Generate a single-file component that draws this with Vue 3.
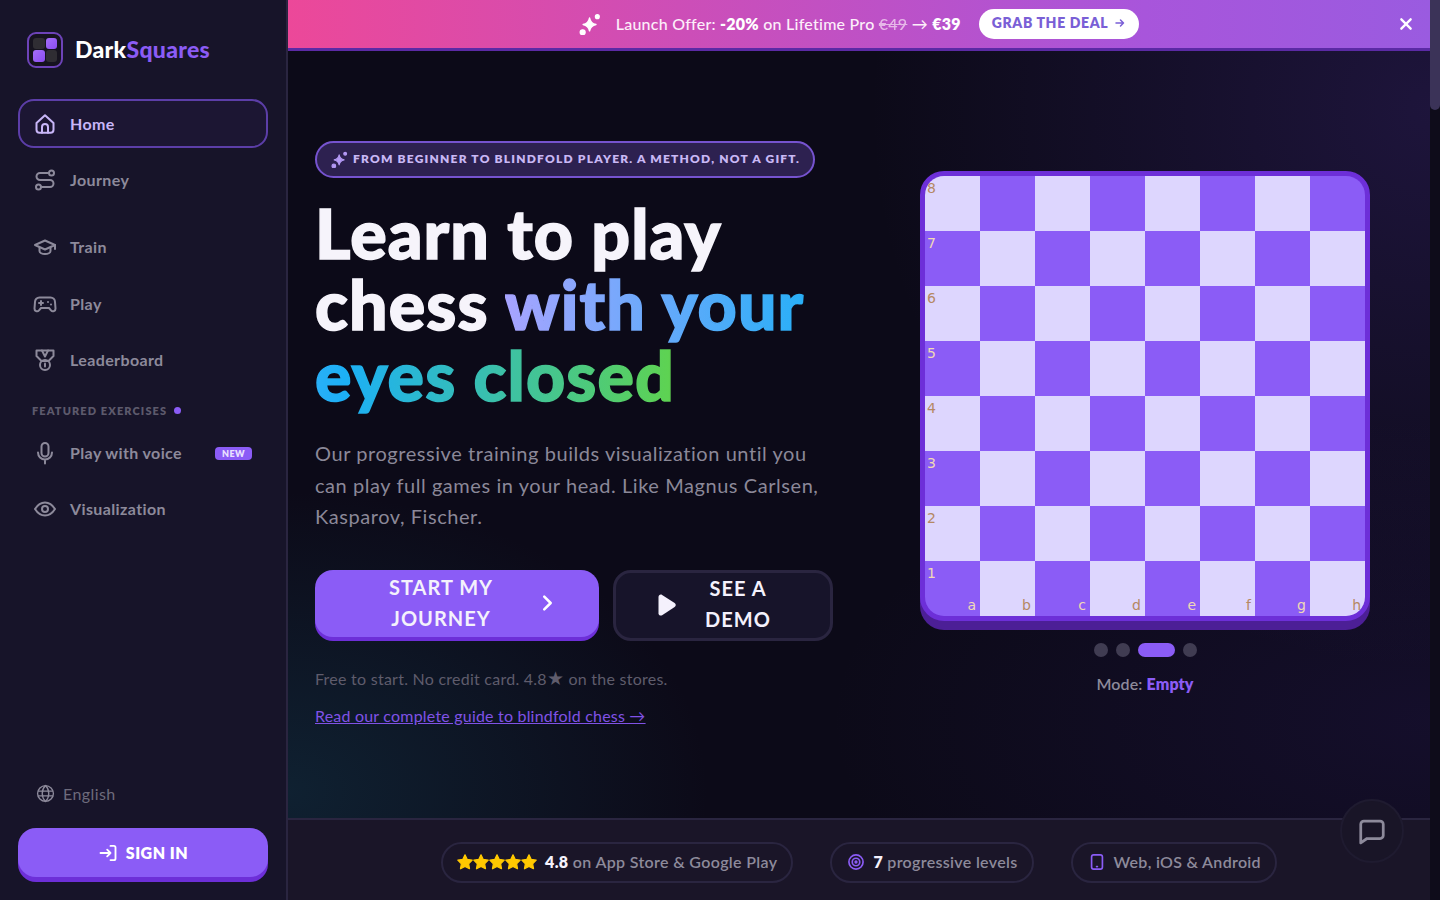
<script setup>
const nav = [
  { label: 'Journey', icon: 'journey', cls: 'gap-after' },
  { label: 'Train', icon: 'train', cls: 'wide-after' },
  { label: 'Play', icon: 'play' },
  { label: 'Leaderboard', icon: 'medal' },
]
const files = ['a', 'b', 'c', 'd', 'e', 'f', 'g', 'h']
const squares = []
for (let r = 0; r < 8; r++) {
  for (let f = 0; f < 8; f++) {
    squares.push({
      id: files[f] + (8 - r),
      light: (r + f) % 2 === 0,
      rank: f === 0 ? 8 - r : null,
      file: r === 7 ? files[f] : null,
    })
  }
}
</script>

<template>
  <div class="page">
    <aside class="sidebar">
      <div class="brand">
        <div class="logo">
          <i class="cell"></i><i class="cell on"></i><i class="cell on"></i><i class="cell"></i>
        </div>
        <span class="brand-name">Dark<em>Squares</em></span>
      </div>

      <a class="nav-item active">
        <svg class="ico" viewBox="0 0 24 24"><path d="M3.5 11 12 3.2 20.5 11v6.800a3 3 0 0 1-3 3h-11a3 3 0 0 1-3-3z" /><path d="M9 20.800V15a3 3 0 0 1 6 0v5.800" /></svg>
        <span>Home</span>
      </a>

      <a v-for="item in nav" :key="item.label" class="nav-item" :class="item.cls">
        <svg v-if="item.icon === 'journey'" class="ico" viewBox="0 0 24 24"><circle cx="18.5" cy="5" r="2.5" /><circle cx="5.5" cy="19" r="2.5" /><path d="M16 5H7a3.5 3.5 0 0 0 0 7h10a3.5 3.5 0 0 1 0 7H8" /></svg>
        <svg v-else-if="item.icon === 'train'" class="ico" viewBox="0 0 24 24"><path d="M2 10 12 5.5 22 10l-10 4.500z" /><path d="M6.5 12.500V16c0 1.700 2.500 3 5.500 3s5.500-1.300 5.500-3v-3.500" /><path d="M22 10v4" /></svg>
        <svg v-else-if="item.icon === 'play'" class="ico" viewBox="0 0 24 24"><path d="M6.5 5.500h11A4.500 4.500 0 0 1 22 10l.5 6.500c.2 2.500-2.900 3.800-4.500 1.900L16 16H8l-2 2.400c-1.600 1.900-4.700.6-4.500-1.900L2 10a4.500 4.500 0 0 1 4.500-4.500z" /><path d="M6 11h4M8 9v4M15 10h.01M18 12.500h.01" /></svg>
        <svg v-else class="ico" viewBox="0 0 24 24"><path d="M3.5 2.500h17v5.500l-5 5h-7l-5-5z" /><path d="M9 2.500l3 6 3-6" /><circle cx="12" cy="17" r="5" /><path d="M12 15.500v3" /></svg>
        <span>{{ item.label }}</span>
      </a>

      <div class="section-label">FEATURED EXERCISES <i class="dot"></i></div>

      <a class="nav-item">
        <svg class="ico" viewBox="0 0 24 24"><rect x="8.5" y="2" width="7" height="13.500" rx="3.5" /><path d="M5 11.500a7 7 0 0 0 14 0M12 18.500V22.500" /></svg>
        <span>Play with voice</span>
        <b class="new">NEW</b>
      </a>
      <a class="nav-item">
        <svg class="ico" viewBox="0 0 24 24"><path d="M2 12c2.500-4 5.800-6.500 10-6.500S19.500 8 22 12c-2.500 4-5.800 6.500-10 6.500S4.500 16 2 12z" /><circle cx="12" cy="12" r="3" /></svg>
        <span>Visualization</span>
      </a>

      <div class="side-foot">
        <div class="lang">
          <svg class="ico small" viewBox="0 0 24 24"><circle cx="12" cy="12" r="10" /><path d="M3 9h18M3 15h18" /><path d="M12 2c-5.500 5.500-5.500 14.500 0 20M12 2c5.500 5.500 5.500 14.500 0 20" /></svg>
          <span>English</span>
        </div>
        <button class="sign-in">
          <svg viewBox="0 0 24 24"><path d="M3 12h12M11 8l4 4-4 4" /><path d="M15 3.500h4a2 2 0 0 1 2 2v13a2 2 0 0 1-2 2h-4" /></svg>
          SIGN IN
        </button>
      </div>
    </aside>

    <main class="main">
      <div class="banner">
        <svg class="spark" viewBox="0 0 24 24"><path d="M11.5 5.500c.9 4.500 2.700 6.300 7 7-4.300.8-6.100 2.500-7 7-.9-4.500-2.700-6.200-7-7 4.300-.7 6.100-2.500 7-7z" /><circle cx="20" cy="4" r="2" /><circle cx="4" cy="21" r="2.600" /></svg>
        <span class="offer">Launch Offer: <b>-20%</b> on Lifetime Pro <s>€49</s> → <b>€39</b></span>
        <button class="deal">GRAB THE DEAL <svg viewBox="0 0 24 24"><path d="M4 12h15M13 6l6 6-6 6" /></svg></button>
        <svg class="close" viewBox="0 0 24 24"><path d="M5 5l14 14M19 5 5 19" /></svg>
      </div>

      <section class="hero">
        <div class="copy">
          <div class="tag">
            <svg viewBox="0 0 24 24"><path d="M11.5 5.500c.9 4.500 2.700 6.300 7 7-4.300.8-6.100 2.500-7 7-.9-4.500-2.700-6.200-7-7 4.300-.7 6.100-2.500 7-7z" /><circle cx="20" cy="4" r="2" /><circle cx="4" cy="21" r="2.600" /></svg>
            FROM BEGINNER TO BLINDFOLD PLAYER. A METHOD, NOT A GIFT.
          </div>
          <h1>Learn to play<br />chess <span class="grad">with your<br />eyes closed</span></h1>
          <p class="lead">Our progressive training builds visualization until you can play full games in your head. Like Magnus Carlsen, Kasparov, Fischer.</p>
          <div class="cta">
            <button class="btn primary">
              <span class="btn-text">START MY JOURNEY</span>
              <svg viewBox="0 0 24 24"><path d="M9 5l7 7-7 7" /></svg>
            </button>
            <button class="btn ghost">
              <svg viewBox="0 0 24 24"><path d="M6 5.500c0-1.500 1.600-2.400 2.900-1.600l10 6.500c1.200.8 1.200 2.400 0 3.200l-10 6.500C7.600 20.900 6 20 6 18.500z" /></svg>
              <span class="btn-text">SEE A DEMO</span>
            </button>
          </div>
          <p class="free">Free to start. No credit card. 4.8<span class="star">★</span> on the stores.</p>
          <a class="guide">Read our complete guide to blindfold chess →</a>
        </div>

        <div class="board-col">
          <div class="board">
            <div v-for="sq in squares" :key="sq.id" class="square" :class="sq.light ? 'light' : 'dark'">
              <span v-if="sq.rank" class="rank">{{ sq.rank }}</span>
              <span v-if="sq.file" class="file">{{ sq.file }}</span>
            </div>
          </div>
          <div class="dots">
            <i></i><i></i><i class="current"></i><i></i>
          </div>
          <div class="mode">Mode: <b>Empty</b></div>
        </div>
      </section>

      <footer class="strip">
        <div class="pill">
          <span class="stars">
            <svg v-for="n in 5" :key="n" viewBox="2 2 20 20"><path d="M12 3l2.800 5.800 6.200.9-4.500 4.400 1.100 6.300-5.600-3-5.600 3 1.100-6.300L3 9.700l6.200-.9z" /></svg>
          </span>
          <span class="t1"><b>4.8</b> on App Store &amp; Google Play</span>
        </div>
        <div class="pill">
          <svg class="pill-ico" viewBox="0 0 24 24"><circle cx="12" cy="12" r="8.5" /><circle cx="12" cy="12" r="4.500" /><circle cx="12" cy="12" r="1" /></svg>
          <span class="t2"><b>7</b> progressive levels</span>
        </div>
        <div class="pill">
          <svg class="pill-ico" viewBox="0 0 24 24"><rect x="5.5" y="3.5" width="13" height="17" rx="2.5" /><path d="M11.5 17.500h1" /></svg>
          <span class="t3">Web, iOS &amp; Android</span>
        </div>
      </footer>

      <button class="chat">
        <svg viewBox="0 0 24 24"><path d="M5.5 4h13A2.500 2.500 0 0 1 21 6.500v9a2.500 2.500 0 0 1-2.500 2.500H8l-5 3.500v-15A2.500 2.500 0 0 1 5.500 4z" /></svg>
      </button>
    </main>

    <div class="scrollbar"><div class="thumb"></div></div>
  </div>
</template>

<style>
html,
body {
  margin: 0;
  background: #0c0a18;
  overflow: hidden;
}
</style>

<style scoped>
.page {
  display: flex;
  width: 1440px;
  height: 900px;
  overflow: hidden;
  font-family: Lato, "Noto Sans", sans-serif;
  color: #fff;
  background: #0c0a18;
}

/* sidebar */
.sidebar {
  box-sizing: border-box;
  width: 288px;
  height: 900px;
  flex: none;
  display: flex;
  flex-direction: column;
  padding: 32px 18px 18px 18px;
  background: #171429;
  border-right: 2px solid #2a2540;
}
.brand {
  display: flex;
  align-items: center;
  gap: 12px;
  height: 35px;
  margin: 0 0 32px 9px;
}
.logo {
  box-sizing: border-box;
  width: 36px;
  height: 36px;
  padding: 4px;
  display: grid;
  grid-template-columns: 1fr 1fr;
  gap: 1px;
  border: 2px solid #6d43b8;
  border-radius: 9px;
  background: #16131f;
}
.cell {
  background: #2f2d33;
  border-radius: 3px;
}
.cell.on {
  background: linear-gradient(135deg, #a56ffa, #8b4cf0);
}
.brand-name {
  padding-bottom: 2px;
  font-size: 23px;
  font-weight: 900;
  letter-spacing: 0.3px;
}
.brand-name em {
  font-style: normal;
  color: #8b5cf6;
}
.nav-item {
  box-sizing: border-box;
  display: flex;
  align-items: center;
  gap: 13px;
  height: 49px;
  margin-bottom: 7px;
  padding: 0 13px;
  border: 2px solid transparent;
  border-radius: 16px;
  font-size: 16px;
  font-weight: 700;
  letter-spacing: 0.38px;
  color: #8d8a9b;
}
.nav-item.gap-after {
  margin-bottom: 18px;
}
.nav-item.wide-after {
  margin-bottom: 8px;
}
.nav-item.active {
  color: #c8b6f8;
  background: #1c1633;
  border-color: #5c3ea8;
}
.ico {
  width: 24px;
  height: 24px;
  flex: none;
  fill: none;
  stroke: currentColor;
  stroke-width: 2;
  stroke-linecap: round;
  stroke-linejoin: round;
}
.ico.small {
  width: 19px;
  height: 19px;
  stroke-width: 1.7;
  color: #8d8a9b;
}
.section-label {
  display: flex;
  align-items: center;
  gap: 7px;
  height: 20px;
  margin: 9px 0 8px 14px;
  font-size: 11px;
  font-weight: 800;
  letter-spacing: 1.1px;
  color: #5d5a6c;
}
.section-label .dot {
  width: 7px;
  height: 7px;
  border-radius: 50%;
  background: #8b5cf6;
}
.new {
  margin: 1px 1px 0 auto;
  padding: 1px 7px;
  border-radius: 4px;
  font-size: 9px;
  font-weight: 800;
  letter-spacing: 0.4px;
  color: #e9e0ff;
  background: #8b5cf6;
}
.side-foot {
  margin-top: auto;
}
.lang {
  display: flex;
  align-items: center;
  gap: 8px;
  margin: 0 0 25px 18px;
  font-size: 16px;
  letter-spacing: 0.4px;
  color: #6e6b7c;
}
.sign-in {
  box-sizing: border-box;
  width: 250px;
  height: 49px;
  margin-bottom: 5px;
  display: flex;
  align-items: center;
  justify-content: center;
  gap: 8px;
  border: 0;
  border-radius: 18px;
  font: 800 16px Lato, sans-serif;
  letter-spacing: 0.5px;
  color: #fff;
  background: #8b5cf6;
  box-shadow: 0 5px 0 #6d2fd8;
}
.sign-in svg {
  width: 20px;
  height: 20px;
  fill: none;
  stroke: #fff;
  stroke-width: 2.2;
  stroke-linecap: round;
  stroke-linejoin: round;
}

/* main column */
.main {
  position: relative;
  flex: 1;
  min-width: 0;
  display: flex;
  flex-direction: column;
  background:
    radial-gradient(420px 300px at 0% 88%, rgba(20, 70, 90, 0.38), transparent 100%),
    radial-gradient(560px 560px at 100% 12%, rgba(80, 50, 160, 0.26), transparent 100%),
    radial-gradient(600px 300px at 100% 80%, rgba(60, 35, 130, 0.18), transparent 100%),
    #0c0a18;
}
.banner {
  position: relative;
  box-sizing: border-box;
  height: 51px;
  flex: none;
  display: flex;
  align-items: center;
  justify-content: center;
  background: linear-gradient(90deg, #ec4899, #a855db 75%, #9a5be0);
  border-bottom: 3px solid #5b2aa5;
}
.spark {
  width: 22px;
  height: 22px;
  margin-right: 15px;
  fill: #fff;
  stroke: #fff;
  stroke-width: 1.6;
  stroke-linejoin: round;
}
.offer {
  margin-bottom: 1px;
  font-size: 16px;
  font-weight: 500;
  letter-spacing: 0.24px;
  color: #fdeefa;
  white-space: nowrap;
}
.offer s {
  opacity: 0.65;
}
.offer b {
  font-weight: 800;
  color: #fff;
}
.deal {
  display: flex;
  align-items: center;
  gap: 6px;
  height: 30px;
  margin-left: 18px;
  padding: 0 13px 3px;
  border: 0;
  border-radius: 15px;
  background: #fff;
  font: 800 14px Lato, sans-serif;
  letter-spacing: 0.65px;
  color: #7a5fd6;
}
.deal svg {
  width: 12px;
  height: 12px;
  fill: none;
  stroke: #7a5fd6;
  stroke-width: 3;
  stroke-linecap: round;
  stroke-linejoin: round;
}
.close {
  position: absolute;
  right: 16px;
  top: 16px;
  width: 16px;
  height: 16px;
  fill: none;
  stroke: #fff;
  stroke-width: 3.5;
  stroke-linecap: round;
}

.hero {
  flex: 1;
  min-height: 0;
  display: flex;
  justify-content: space-between;
  padding: 90px 60px 0 27px;
}
.copy {
  width: 520px;
}
.tag {
  box-sizing: border-box;
  display: inline-flex;
  align-items: center;
  gap: 5px;
  width: 500px;
  height: 37px;
  padding: 0 0 3px 14px;
  border: 2px solid #7653cf;
  border-radius: 19px;
  background: #2d2150;
  font-size: 12px;
  font-weight: 800;
  letter-spacing: 1.2px;
  color: #c9b8f5;
  white-space: nowrap;
}
.tag svg {
  width: 17px;
  height: 17px;
  margin-top: 3px;
  fill: #b499f5;
  stroke: #b499f5;
  stroke-width: 1.6;
  stroke-linejoin: round;
}
h1 {
  margin: 19px 0 0;
  width: 540px;
  font-size: 68px;
  font-weight: 900;
  line-height: 71px;
  letter-spacing: 1.1px;
  color: #f6f4fb;
  -webkit-text-stroke: 1.5px #f6f4fb;
}
.grad {
  color: transparent;
  -webkit-text-stroke: 1.5px transparent;
  background: linear-gradient(90deg, #a8a4ff, #1cb0f6 50%, #5fd34f);
  background-clip: text;
  -webkit-background-clip: text;
}
.lead {
  width: 510px;
  margin: 28px 0 0;
  font-size: 20px;
  line-height: 31.5px;
  letter-spacing: 0.56px;
  color: #8b8898;
}
.cta {
  display: flex;
  gap: 14px;
  width: 520px;
  margin-top: 37px;
}
.btn {
  box-sizing: border-box;
  display: flex;
  align-items: center;
  height: 71px;
  border-radius: 18px;
  font: 700 20px/31px Lato, sans-serif;
  letter-spacing: 1px;
  color: #f4f1fc;
}
.btn-text {
  text-align: center;
}
.btn.primary {
  width: 284px;
  height: 67px;
  margin-bottom: 4px;
  padding: 0 0 0 62px;
  gap: 31px;
  border: 0;
  background: #8b5cf6;
  box-shadow: 0 4px 0 #6d2fd8;
}
.btn.primary .btn-text {
  width: 128px;
  padding-bottom: 1px;
}
.btn.primary svg {
  width: 22px;
  height: 22px;
  flex: none;
  fill: none;
  stroke: #fff;
  stroke-width: 2.8;
  stroke-linecap: round;
  stroke-linejoin: round;
}
.btn.ghost {
  width: 220px;
  padding: 0 0 0 35px;
  gap: 19px;
  background: #17142a;
  border: 3px solid #2a2540;
}
.btn.ghost .btn-text {
  width: 76px;
  padding-bottom: 2px;
}
.btn.ghost svg {
  width: 30px;
  height: 30px;
  flex: none;
  fill: #f4f1fc;
}
.free {
  margin: 26px 0 0;
  font-size: 16px;
  line-height: 24px;
  letter-spacing: 0.25px;
  color: #5f5c6c;
}
.star {
  font-size: 19px;
  line-height: 0;
}
.guide {
  display: inline-block;
  margin-top: 13px;
  font-size: 16px;
  line-height: 24px;
  letter-spacing: 0.2px;
  color: #8052e6;
  text-decoration: underline;
}

/* board */
.board-col {
  display: flex;
  flex-direction: column;
  align-items: center;
  padding-top: 30px;
}
.board {
  box-sizing: border-box;
  width: 450px;
  height: 450px;
  display: grid;
  grid-template-columns: repeat(8, 55px);
  grid-template-rows: repeat(8, 55px);
  overflow: hidden;
  border: 5px solid #6d2fd8;
  border-radius: 24px;
  background: #6d2fd8;
  box-shadow: 0 9px 0 #4c1f96;
}
.square {
  position: relative;
  font-family: "DejaVu Sans", sans-serif;
  font-size: 14px;
}
.square.light {
  background: #ddd6fe;
  color: #b58863;
}
.square.dark {
  background: #8b5cf6;
  color: #f0d9b5;
}
.rank {
  position: absolute;
  left: 2px;
  top: 4px;
}
.file {
  position: absolute;
  right: 4px;
  bottom: 3px;
}
.dots {
  display: flex;
  align-items: center;
  gap: 8px;
  margin-top: 22px;
}
.dots i {
  width: 14px;
  height: 14px;
  border-radius: 7px;
  background: #403c52;
}
.dots i.current {
  width: 37px;
  background: #8b5cf6;
}
.mode {
  margin-top: 17px;
  font-size: 16px;
  font-weight: 600;
  letter-spacing: 0.1px;
  color: #8d8a9b;
}
.mode b {
  font-weight: 800;
  color: #8b5cf6;
}

/* bottom strip */
.strip {
  box-sizing: border-box;
  height: 82px;
  flex: none;
  display: flex;
  align-items: center;
  justify-content: center;
  gap: 37px;
  padding-top: 4px;
  background: #1a1528;
  border-top: 2px solid #2a2540;
}
.pill {
  box-sizing: border-box;
  height: 41px;
  display: flex;
  align-items: center;
  gap: 7px;
  padding: 0 14px;
  border: 2px solid #2a2540;
  border-radius: 21px;
  font-size: 16px;
  font-weight: 600;
  color: #8d8a9b;
}
.pill span {
  padding-bottom: 2px;
}
.pill b {
  font-weight: 800;
  color: #f4f1fc;
}
.t1 {
  letter-spacing: 0.34px;
}
.t2 {
  letter-spacing: 0.32px;
}
.t3 {
  letter-spacing: 0.3px;
}
.pill .stars {
  display: flex;
  margin-right: 1px;
  padding: 0;
}
.stars svg {
  width: 16px;
  height: 16px;
  overflow: visible;
  fill: #ffc800;
  stroke: #ffc800;
  stroke-width: 1.6;
  stroke-linejoin: round;
}
.pill-ico {
  width: 20px;
  height: 20px;
  fill: none;
  stroke: #8b5cf6;
  stroke-width: 2;
  stroke-linecap: round;
}
.chat {
  position: absolute;
  right: 26px;
  bottom: 37px;
  width: 64px;
  height: 64px;
  display: flex;
  align-items: center;
  justify-content: center;
  padding: 0;
  border: 2px solid #1f1b30;
  border-radius: 50%;
  background: #191527;
}
.chat svg {
  width: 30px;
  height: 30px;
  fill: none;
  stroke: #8d8a9b;
  stroke-width: 2.2;
  stroke-linejoin: round;
}
.scrollbar {
  width: 10px;
  flex: none;
  background: #0e0c1a;
}
.thumb {
  height: 110px;
  background: #3b3358;
  border-radius: 0 0 5px 5px;
}
</style>
